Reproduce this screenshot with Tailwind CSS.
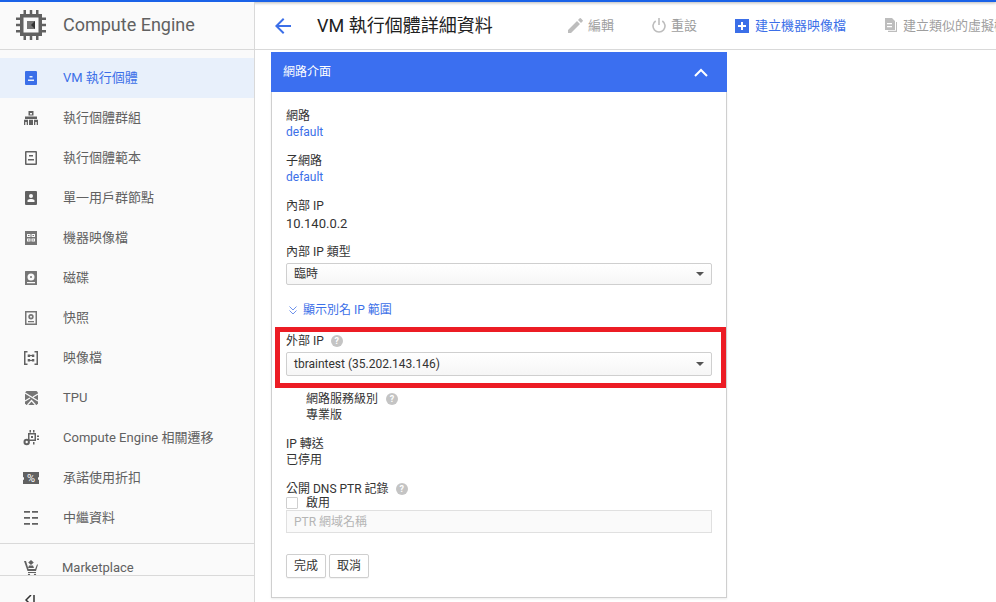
<!DOCTYPE html>
<html lang="zh-TW">
<head>
<meta charset="UTF-8">
<script src="https://cdn.jsdelivr.net/npm/@tailwindcss/browser@4"></script>
<title>VM 執行個體詳細資料</title>
</head>
<body class="h-[602px] w-[996px] overflow-hidden bg-white font-['Roboto','Noto_Sans_CJK_TC',sans-serif] text-[13px] text-[#333]">
<div class="h-[2px] bg-[#1a62e8] shadow-[0_1px_3px_rgba(0,0,0,0.35)]"></div>
<div class="flex h-[600px]">
  <!-- sidebar -->
  <aside class="flex w-[255px] shrink-0 flex-col border-r border-[#d9d9d9] bg-[#fafafa] text-[#616161]">
    <div class="flex h-[48px] shrink-0 items-center border-b border-[#d9d9d9] pb-[2px] pl-[16px]">
      <svg class="h-[30px] w-[30px]" viewBox="0 0 30 30"><path fill="#616161" d="M4 4h22v22H4z"/><path fill="#fafafa" d="M7.500 7.500h15v15h-15z"/><path fill="#757575" d="M11 11h8v8h-8z"/><path fill="#333" d="M15 15l4-4v8z"/><path fill="#616161" d="M7.500 0h2.500v4H7.500zm6.250 0h2.500v4h-2.500zM20 0h2.500v4H20zM7.500 26h2.500v4H7.500zm6.250 0h2.500v4h-2.500zM20 26h2.500v4H20zM0 7.500h4V10H0zm0 6.250h4v2.500H0zM0 20h4v2.500H0zM26 7.500h4V10h-4zm0 6.250h4v2.500h-4zM26 20h4v2.500h-4z"/></svg>
      <span class="ml-[17px] text-[18px]">Compute Engine</span>
    </div>
    <nav class="mt-[8px] flex flex-col">
      <a class="flex h-[40px] items-center bg-[#e8f0fb] pl-[24px] text-[#3b6fe8]">
        <svg class="h-[14px] w-[14px]" viewBox="0 0 14 14"><path fill="#3b6fe8" d="M2 0h10a1.500 1.500 0 0 1 1 1v12a1 1 0 0 1-1 1H2a1 1 0 0 1-1-1V1a1 1 0 0 1 1-1z"/><path fill="#e8f0fb" d="M5.500 5h3v1.500h-3zM4 8.500h6V10H4z"/></svg>
        <span class="ml-[25px]">VM 執行個體</span>
      </a>
      <a class="flex h-[40px] items-center pl-[24px]">
        <svg class="h-[14px] w-[14px]" viewBox="0 0 14 14"><path fill="#616161" d="M4.500 0h5v4.500h-5zM1 5.500h12V8H1zM0 8.700h4V14H0zm5 0h4V14H5zm5 0h4V14h-4z"/><path fill="#fafafa" d="M6 2h2v1.500H6zM1.300 11h1.400v3H1.300zm10 0h1.400v3h-1.400z"/></svg>
        <span class="ml-[25px]">執行個體群組</span>
      </a>
      <a class="flex h-[40px] items-center pl-[24px]">
        <svg class="h-[14px] w-[14px]" viewBox="0 0 14 14"><path fill="#616161" fill-rule="evenodd" d="M2 0h10a1 1 0 0 1 1 1v12a1 1 0 0 1-1 1H2a1 1 0 0 1-1-1V1a1 1 0 0 1 1-1zm.500 1.500v11h9v-11zM5 4h4v1.500H5zM4 8h6v1.500H4z"/></svg>
        <span class="ml-[25px]">執行個體範本</span>
      </a>
      <a class="flex h-[40px] items-center pl-[24px]">
        <svg class="h-[14px] w-[14px]" viewBox="0 0 14 14"><path fill="#616161" fill-rule="evenodd" d="M2 0h10a1 1 0 0 1 1 1v12a1 1 0 0 1-1 1H2a1 1 0 0 1-1-1V1a1 1 0 0 1 1-1zm5 3a2 2 0 1 0 0 4 2 2 0 0 0 0-4zM3.500 11h7V9.500C10.500 8.500 8.500 8 7 8s-3.500.5-3.500 1.500z"/></svg>
        <span class="ml-[25px]">單一用戶群節點</span>
      </a>
      <a class="flex h-[40px] items-center pl-[24px]">
        <svg class="h-[14px] w-[14px]" viewBox="0 0 14 14"><path fill="#757575" fill-rule="evenodd" d="M1 0h12v14H1zm2 3v3h3.500V3zm4.500 0v3H11V3zM3 7.500v3h3.500v-3zm4.500 0v3H11v-3z"/><path fill="#757575" d="M4 4h1.500v1H4zm4.500 0H10v1H8.500zM4 8.500h1.500v1H4zm4.500 0H10v1H8.500z"/></svg>
        <span class="ml-[25px]">機器映像檔</span>
      </a>
      <a class="flex h-[40px] items-center pl-[24px]">
        <svg class="h-[14px] w-[14px]" viewBox="0 0 14 14"><path fill="#757575" fill-rule="evenodd" d="M1.500 0h11a.5.5 0 0 1 .5.500v13a.5.5 0 0 1-.5.500h-11a.5.5 0 0 1-.5-.500V.5a.5.5 0 0 1 .5-.500zM7 2.500a3.500 3.500 0 1 0 0 7 3.500 3.500 0 0 0 0-7zm0 2.500a1 1 0 1 1 0 2 1 1 0 0 1 0-2zM3 11v1.200h8V11z"/></svg>
        <span class="ml-[25px]">磁碟</span>
      </a>
      <a class="flex h-[40px] items-center pl-[24px]">
        <svg class="h-[14px] w-[14px]" viewBox="0 0 14 14"><path fill="#757575" fill-rule="evenodd" d="M1 0h12v14H1zm1.500 1.500v11h9v-11zM7 3a2.700 2.700 0 1 1 0 5.400A2.700 2.700 0 0 1 7 3zm0 1.700a1 1 0 1 0 0 2 1 1 0 0 0 0-2zM4 10h6v1.200H4z"/></svg>
        <span class="ml-[25px]">快照</span>
      </a>
      <a class="flex h-[40px] items-center pl-[24px]">
        <svg class="h-[14px] w-[14px]" viewBox="0 0 14 14"><path fill="#616161" d="M0 0h3.500v1.500h-2v11h2V14H0zm14 0h-3.500v1.500h2v11h-2V14H14zM3.700 3.500h2.500V6H3.700zm4.100 0h2.500V6H7.800zM6.200 4h1.600v1H6.200zM3.700 8h2.500v2.500H3.700zm4.100 0h2.500v2.500H7.800zM6.200 9h1.600v1H6.200z"/></svg>
        <span class="ml-[25px]">映像檔</span>
      </a>
      <a class="flex h-[40px] items-center pl-[25px]">
        <svg class="h-[14px] w-[13px]" viewBox="0 0 13 14"><path fill="#757575" d="M0 1.500 1.500 0h10L13 1.500v11L11.500 14h-10L0 12.500z"/><path stroke="#fafafa" stroke-width="1.300" fill="none" d="M0 2l13 8M0 10l5-3M2.500 14 6.500 9.500l4 4.500M8 6l5-3"/></svg>
        <span class="ml-[25px]">TPU</span>
      </a>
      <a class="flex h-[40px] items-center pl-[23px]">
        <svg class="h-[16px] w-[16px]" viewBox="0 0 16 16"><path fill="#616161" fill-rule="evenodd" d="M5 3h8v8H5zm1.500 1.500v5h5v-5zM8 6h2v2H8zM6.500 0H8v2.500H6.500zm3.500 0h1.500v2.500H10zM14 5.500h2V7h-2zm0 3h2V10h-2zM10 12h1.500v2.500H10z"/><circle cx="3.700" cy="12" r="3.200" fill="#616161"/><circle cx="3.700" cy="12" r="1.200" fill="#fafafa"/></svg>
        <span class="ml-[24px]">Compute Engine 相關遷移</span>
      </a>
      <a class="flex h-[40px] items-center pl-[23px]">
        <span class="relative flex h-[12px] w-[16px] items-center justify-center bg-[#616161] text-[11px] leading-none text-white">%
          <span class="absolute left-[-1px] top-[4.500px] h-[3px] w-[2px] rounded-full bg-[#fafafa]"></span>
          <span class="absolute right-[-1px] top-[4.500px] h-[3px] w-[2px] rounded-full bg-[#fafafa]"></span>
        </span>
        <span class="ml-[24px]">承諾使用折扣</span>
      </a>
      <a class="flex h-[40px] items-center pl-[24px]">
        <svg class="h-[14px] w-[14px]" viewBox="0 0 14 14"><path fill="#616161" d="M0 0h6v1.700H0zm8 0h6v1.700H8zM0 6h6v1.700H0zm8 0h6v1.700H8zM0 12h6v1.700H0zm8 0h6v1.700H8z"/></svg>
        <span class="ml-[25px]">中繼資料</span>
      </a>
    </nav>
    <div class="mt-[5px] flex h-[32px] shrink-0 items-center border-t border-[#d9d9d9] pt-[16px] pl-[24px]">
      <svg class="h-[16px] w-[14px]" viewBox="0 0 14 16"><path fill="#616161" d="M7 0l2.800 2.500L7 5 4.200 2.500zM0 1h2l2.500 8h6.700L13 4.500h1L12 11H3.500zM4 12h8v1H4z"/><path fill="#616161" d="M5 5.500h4l1 2.500H4z"/><circle cx="5" cy="15" r="1.200" fill="#616161"/><circle cx="11" cy="15" r="1.200" fill="#616161"/></svg>
      <span class="ml-[24px]">Marketplace</span>
    </div>
    <div class="flex h-[26px] items-start border-t border-[#d9d9d9] bg-[#fafafa] pl-[25px] pt-[19px]">
      <svg class="h-[10px] w-[10px]" viewBox="0 0 10 10"><path stroke="#333" stroke-width="1.500" fill="none" d="M6 0 1 5l5 5M9 0v10"/></svg>
    </div>
  </aside>

  <!-- main -->
  <main class="min-w-0 flex-1 overflow-hidden">
    <header class="flex h-[48px] items-center overflow-hidden border-b border-[#d9d9d9] whitespace-nowrap">
      <svg class="ml-[20px] h-[16px] w-[16px] shrink-0" viewBox="0 0 16 16"><path fill="#3b6fe8" d="M16 7H3.800l5.600-5.600L8 0 0 8l8 8 1.400-1.400L3.800 9H16z"/></svg>
      <h1 class="ml-[26px] w-[251px] shrink-0 text-[18px] font-normal text-[#212121]">VM 執行個體詳細資料</h1>
      <svg class="h-[15px] w-[15px] shrink-0" viewBox="0 0 15 15"><path fill="#bdbdbd" d="M0 12v3h3L12 6 9 3zM14.700 3.300a.8.800 0 0 0 0-1.100L12.800.3a.8.800 0 0 0-1.100 0L10 2l3 3z"/></svg>
      <span class="ml-[5px] shrink-0 text-[#9e9e9e]">編輯</span>
      <svg class="ml-[38px] h-[15px] w-[14px] shrink-0" viewBox="0 0 14 15"><path fill="none" stroke="#bdbdbd" stroke-width="1.600" d="M7 0v7M3.700 3A6 6 0 1 0 10.300 3"/></svg>
      <span class="ml-[5px] shrink-0 text-[#9e9e9e]">重設</span>
      <svg class="ml-[38px] h-[14px] w-[14px] shrink-0" viewBox="0 0 14 14"><path fill="#3b6fe8" d="M0 0h14v14H0z"/><path fill="#fff" d="M6 3h2v3h3v2H8v3H6V8H3V6h3z"/></svg>
      <span class="ml-[6px] shrink-0 text-[#3b6fe8]">建立機器映像檔</span>
      <svg class="ml-[38px] h-[16px] w-[13px] shrink-0" viewBox="0 0 13 16"><path fill="#bdbdbd" fill-rule="evenodd" d="M1 0h7l3 3v9H1zm2 5v1.300h5V5zm0 3v1.300h5V8z"/><path fill="#bdbdbd" d="M12 4h1v10H4v-1.200h8z"/></svg>
      <span class="ml-[6px] shrink-0 text-[#9e9e9e]">建立類似的虛擬機器</span>
    </header>

    <section class="ml-[16px] mt-[2px] w-[456px]">
      <div class="flex h-[40px] items-center justify-between bg-[#3b6ff0] pl-[12px] pr-[19px] text-[12px] text-white">
        <span>網路介面</span>
        <svg class="h-[9px] w-[14px]" viewBox="0 0 14 9"><path fill="none" stroke="#fff" stroke-width="2" d="M1 8l6-6 6 6"/></svg>
      </div>
      <div class="h-[506px] border-x border-b border-[#cfcfcf] px-[14px] pt-[16px] text-[12px] leading-[16px] text-[#333] shadow-[0_1px_2px_rgba(0,0,0,0.08)]">
        <div>網路</div>
        <a class="block text-[#3b6fe8]">default</a>
        <div class="mt-[13px]">子網路</div>
        <a class="block text-[#3b6fe8]">default</a>
        <div class="mt-[13px]">內部 IP</div>
        <div class="mt-[2px] text-[13px]">10.140.0.2</div>
        <div class="mt-[12px]">內部 IP 類型</div>
        <div class="mt-[3px] flex h-[22px] items-center justify-between rounded-[2px] border border-[#cfcfcf] bg-gradient-to-b from-white to-[#f6f6f6] px-[7px]">
          <span>臨時</span>
          <span class="h-0 w-0 border-x-[4px] border-t-[4px] border-x-transparent border-t-[#555]"></span>
        </div>
        <div class="ml-[3px] mt-[17px] flex items-center text-[#3b6fe8]">
          <svg class="h-[9px] w-[8px]" viewBox="0 0 8 9"><path fill="none" stroke="#6f93ec" stroke-width="1" d="M.5 .5 4 4 7.500 .5M.5 4.500 4 8l3.500-3.500"/></svg>
          <span class="ml-[6px]">顯示別名 IP 範圍</span>
        </div>
        <div class="relative mt-[15px]">
          <div class="absolute left-[-11px] top-[-6px] h-[61px] w-[451px] border-[5px] border-[#ec1c24]"></div>
          <div class="flex items-center">外部 IP
            <span class="ml-[7px] flex h-[12px] w-[12px] items-center justify-center rounded-full bg-[#c4c4c4] text-[9px] font-bold leading-none text-white">?</span>
          </div>
          <div class="mt-[3px] flex h-[24px] items-center justify-between rounded-[2px] border border-[#cfcfcf] bg-gradient-to-b from-white to-[#f6f6f6] px-[7px]">
            <span>tbraintest (35.202.143.146)</span>
            <span class="h-0 w-0 border-x-[4px] border-t-[4px] border-x-transparent border-t-[#555]"></span>
          </div>
        </div>
        <div class="ml-[20px] mt-[15px] flex items-center">網路服務級別
          <span class="ml-[8px] flex h-[12px] w-[12px] items-center justify-center rounded-full bg-[#c4c4c4] text-[9px] font-bold leading-none text-white">?</span>
        </div>
        <div class="ml-[20px]">專業版</div>
        <div class="mt-[13px]">IP 轉送</div>
        <div>已停用</div>
        <div class="mt-[13px] flex items-center">公開 DNS PTR 記錄
          <span class="ml-[7px] flex h-[12px] w-[12px] items-center justify-center rounded-full bg-[#c4c4c4] text-[9px] font-bold leading-none text-white">?</span>
        </div>
        <div class="flex h-[12px] items-center">
          <span class="h-[12px] w-[12px] rounded-[1px] border border-[#cfcfcf] bg-white"></span>
          <span class="ml-[8px]">啟用</span>
        </div>
        <div class="mt-[1px] flex h-[23px] items-center border border-[#e0e0e0] bg-[#fafafa] pl-[7px] text-[#b5b5b5]">PTR 網域名稱</div>
        <div class="mt-[21px] flex gap-[3px]">
          <button class="h-[24px] w-[40px] rounded-[2px] border border-[#cfcfcf] bg-white text-[12px] shadow-[0_1px_1px_rgba(0,0,0,0.05)]">完成</button>
          <button class="h-[24px] w-[40px] rounded-[2px] border border-[#cfcfcf] bg-white text-[12px] shadow-[0_1px_1px_rgba(0,0,0,0.05)]">取消</button>
        </div>
      </div>
    </section>
  </main>
</div>
</body>
</html>
